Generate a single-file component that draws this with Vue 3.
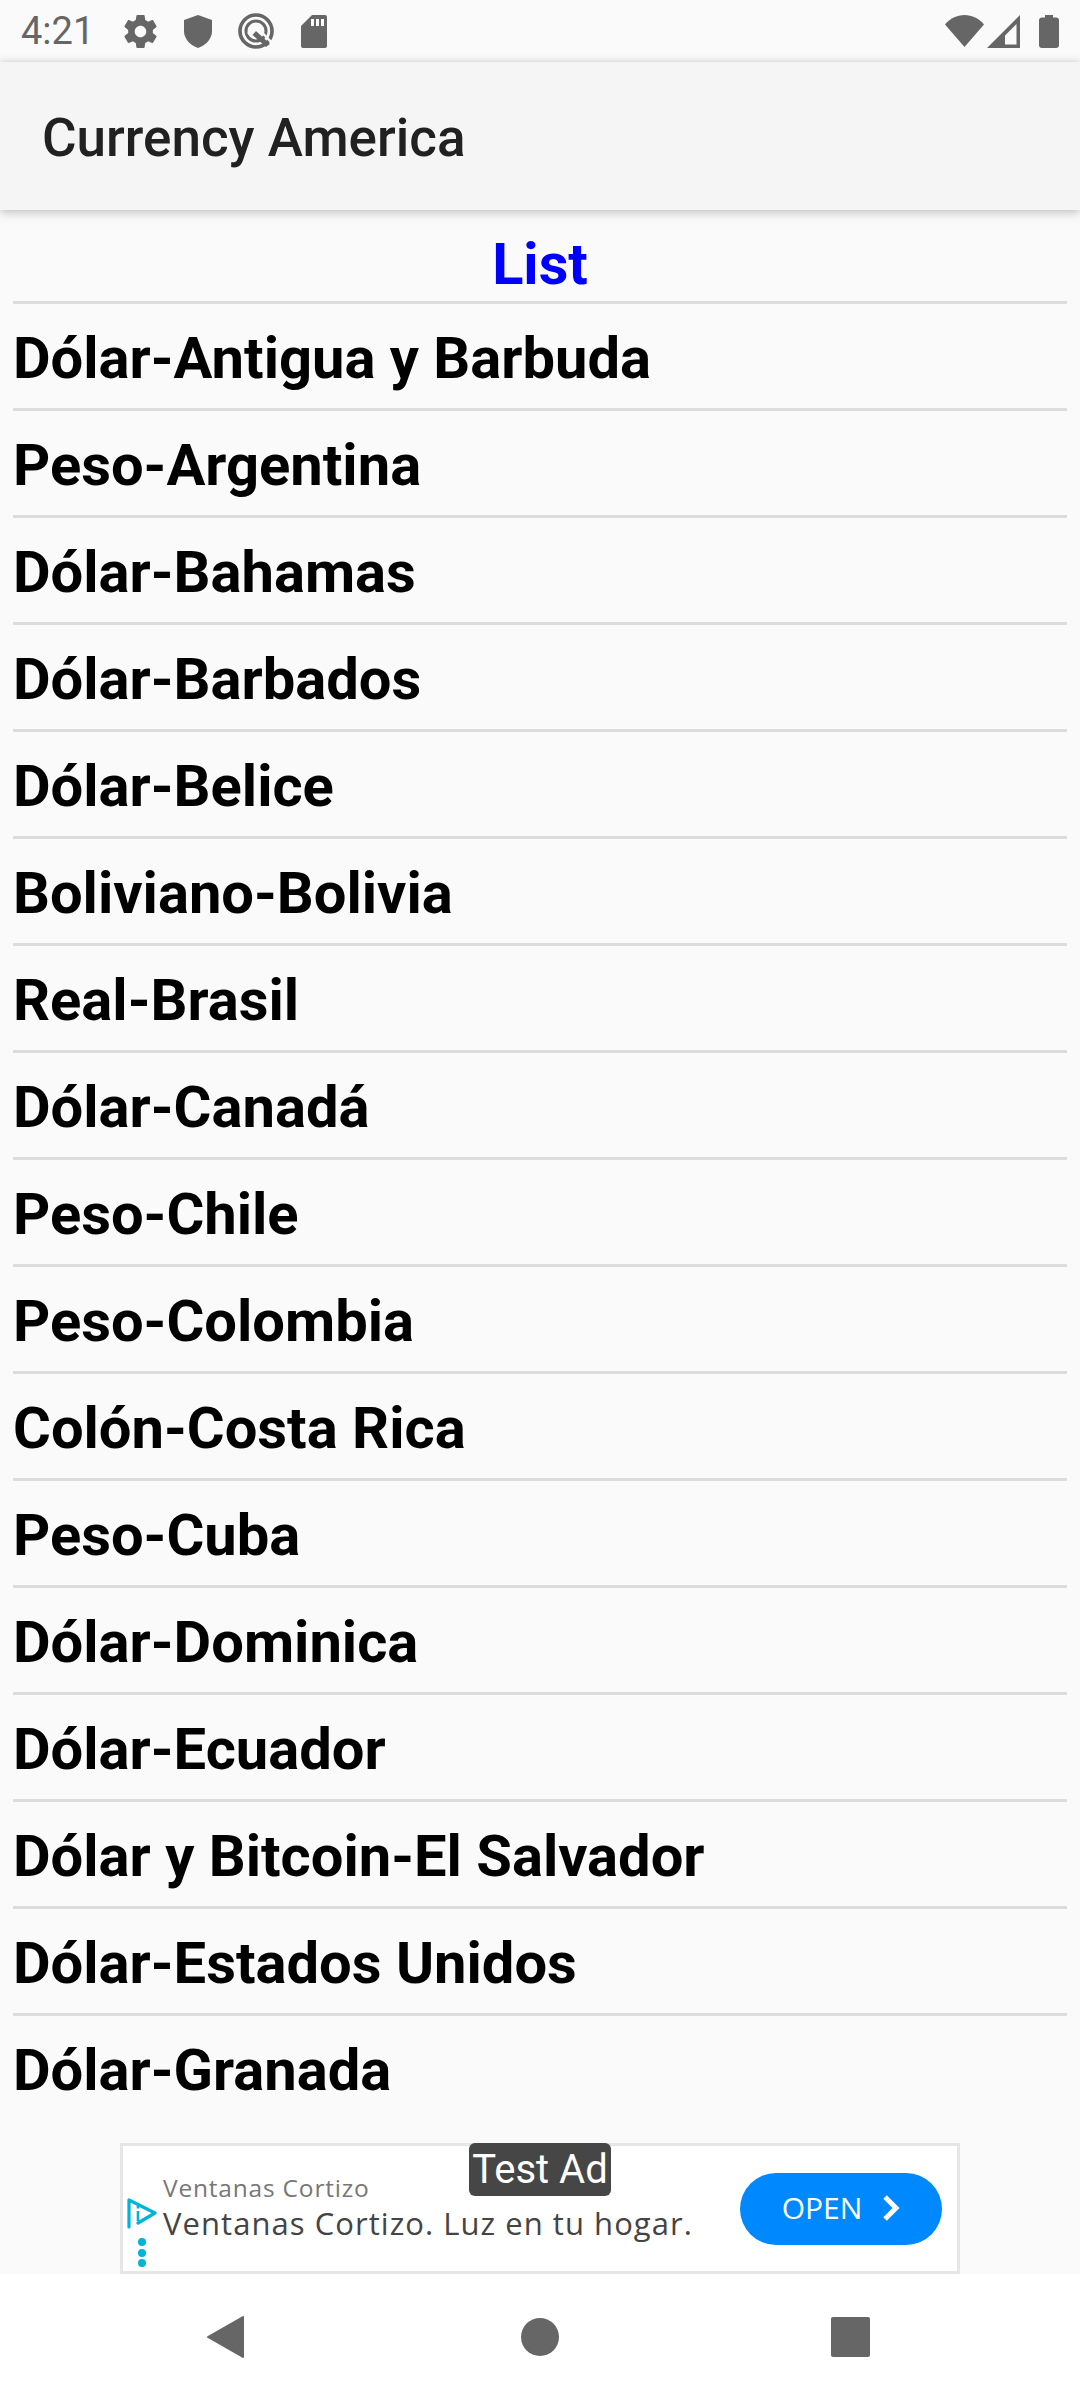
<script setup>
const rows = [
  'Dólar-Antigua y Barbuda','Peso-Argentina','Dólar-Bahamas','Dólar-Barbados','Dólar-Belice',
  'Boliviano-Bolivia','Real-Brasil','Dólar-Canadá','Peso-Chile','Peso-Colombia','Colón-Costa Rica',
  'Peso-Cuba','Dólar-Dominica','Dólar-Ecuador','Dólar y Bitcoin-El Salvador','Dólar-Estados Unidos','Dólar-Granada'
]
</script>

<template>
  <div class="page">
    <div class="status">
      <span class="time">4:21</span>
      <div class="left-icons">
        <svg width="33" height="33" viewBox="2 2 20 20"><path fill="#666" d="M19.43 12.98c.04-.32.07-.64.07-.98s-.03-.66-.07-.98l2.11-1.65c.19-.15.24-.42.12-.64l-2-3.46c-.12-.22-.39-.3-.61-.22l-2.49 1c-.52-.4-1.08-.73-1.69-.98l-.38-2.65C14.46 2.18 14.25 2 14 2h-4c-.25 0-.46.18-.49.42l-.38 2.65c-.61.25-1.17.59-1.69.98l-2.49-1c-.23-.09-.49 0-.61.22l-2 3.46c-.13.22-.07.49.12.64l2.11 1.65c-.04.32-.07.65-.07.98s.03.66.07.98l-2.11 1.65c-.19.15-.24.42-.12.64l2 3.46c.12.22.39.3.61.22l2.49-1c.52.4 1.08.73 1.69.98l.38 2.65c.03.24.24.42.49.42h4c.25 0 .46-.18.49-.42l.38-2.65c.61-.25 1.17-.59 1.69-.98l2.49 1c.23.09.49 0 .61-.22l2-3.46c.12-.22.07-.49-.12-.64l-2.11-1.65zM12 15.5c-1.93 0-3.5-1.57-3.5-3.5s1.57-3.5 3.5-3.5 3.5 1.57 3.5 3.5-1.57 3.5-3.5 3.5z"/></svg>
        <svg width="28" height="33" viewBox="0 0 28 33"><path fill="#666" d="M14 0 L28 5 V16 C28 24 22 30 14 33 C6 30 0 24 0 16 V5 Z"/></svg>
        <svg width="36" height="36" viewBox="0 0 36 36"><circle cx="18" cy="18" r="16" fill="none" stroke="#666" stroke-width="3.600"/><circle cx="18" cy="18" r="10" fill="none" stroke="#666" stroke-width="3"/><path d="M10 21 L18 13 L34 30" fill="none" stroke="#fafafa" stroke-width="2.500"/><path d="M14.500 22 L18 18 L32 31 L28 34 Z" fill="#666"/></svg>
        <svg width="26" height="33" viewBox="0 0 26 33"><path fill="#666" d="M11 0 H24 a2 2 0 0 1 2 2 V31 a2 2 0 0 1 -2 2 H2 a2 2 0 0 1 -2 -2 V11 Z"/><path fill="#fafafa" d="M10 4h3v7h-3zM15 4h3v7h-3zM20 4h3v7h-3z"/></svg>
      </div>
      <div class="right-icons">
        <svg width="39" height="32" viewBox="0 0 39 32"><path fill="#666" d="M19.500 32 L0 9.500 C5 3.500 12 0 19.500 0 C27 0 34 3.500 39 9.500 Z"/></svg>
        <svg class="sig" width="33" height="33" viewBox="0 0 33 33"><path fill="#666" fill-rule="evenodd" d="M0 33 L33 0 V33 Z M18 29.500 H29.500 V9 L18 20.500 Z"/></svg>
        <svg class="bat" width="20" height="33" viewBox="0 0 20 33"><path fill="#666" d="M6 0 H14 V2.500 H17 a3 3 0 0 1 3 3 V30 a3 3 0 0 1 -3 3 H3 a3 3 0 0 1 -3 -3 V5.500 a3 3 0 0 1 3 -3 H6 Z"/></svg>
      </div>
    </div>
    <header class="bar">Currency America</header>
    <main class="list">
      <div class="row head">List</div>
      <div v-for="r in rows" :key="r" class="row item">{{ r }}</div>
    </main>
    <div class="ad-wrap">
      <div class="ad">
        <div class="badge">Test Ad</div>
        <div class="adchoice">
          <svg width="30" height="31" viewBox="0 0 30 31"><path d="M2 2 L28 15 L11 25 M2 2 V29" fill="none" stroke="#00b4d8" stroke-width="3.200" stroke-linejoin="round" stroke-linecap="round"/><path d="M11 13 V23 M11 8 V10.500" fill="none" stroke="#00b4d8" stroke-width="2.600"/></svg>
          <div class="dots"><i></i><i></i><i></i></div>
        </div>
        <div class="adtext">
          <div class="a1">Ventanas Cortizo</div>
          <div class="a2">Ventanas Cortizo. Luz en tu hogar.</div>
        </div>
        <div class="open">
          <span>OPEN</span>
          <svg width="18" height="26" viewBox="0 0 18 26"><path d="M3 2 L14 13 L3 24" fill="none" stroke="#fff" stroke-width="5"/></svg>
        </div>
      </div>
    </div>
    <nav class="nav">
      <svg width="37" height="42" viewBox="0 0 37 42"><path fill="#666" stroke="#666" stroke-width="2" stroke-linejoin="round" d="M36 1 V41 L1 21 Z"/></svg>
      <svg class="home" width="38" height="38" viewBox="0 0 38 38"><circle cx="19" cy="19" r="19" fill="#666"/></svg>
      <svg class="recent" width="39" height="40" viewBox="0 0 39 40"><rect width="39" height="40" rx="2" fill="#666"/></svg>
    </nav>
  </div>
</template>

<style scoped>
.page { width: 1080px; height: 2400px; display: flex; flex-direction: column; background: #fafafa; font-family: Roboto, sans-serif; overflow: hidden; }
.status { height: 62px; flex: none; display: flex; align-items: center; padding: 0 21px; box-sizing: border-box; color: #666; background: #fafafa; }
.time { font-size: 38px; width: 103px; }
.left-icons { display: flex; align-items: center; gap: 26.5px; }
.right-icons { margin-left: auto; display: flex; align-items: center; }
.sig { margin-left: 3px; }
.bat { margin-left: 19px; }
.bar { height: 148px; flex: none; display: flex; align-items: center; padding-left: 42px; padding-top: 3px; box-sizing: border-box; font-size: 53px; font-weight: 500; color: #212121; background: #f5f5f5; box-shadow: 0 0 8px rgba(0,0,0,.18), 0 5px 10px rgba(0,0,0,.1); position: relative; }
.list { flex: 1; padding: 0 13px; min-height: 0; }
.row { box-sizing: border-box; border-bottom: 3px solid #dcdcdc; }
.head { height: 94px; font-size: 57.75px; font-weight: 700; color: #0000ff; text-align: center; line-height: 109px; }
.item { height: 107px; font-size: 57.9px; font-weight: 700; color: #000; display: flex; align-items: center; padding-top: 3px; }
.item:last-child { border-bottom: 0; padding-top: 0; }
.ad-wrap { flex: none; height: 131px; display: flex; justify-content: center; }
.ad { width: 840px; height: 131px; box-sizing: border-box; border: 3px solid #e6e6e6; background: #fff; position: relative; display: flex; font-family: "Open Sans", sans-serif; }
.badge { position: absolute; left: 346px; top: -3px; width: 142px; height: 53px; background: #464646; border-radius: 6px; color: #fff; font-family: Roboto, sans-serif; font-size: 40px; display: flex; align-items: center; justify-content: center; white-space: nowrap; }
.adchoice { width: 40px; flex: none; padding-left: 4px; padding-top: 52px; box-sizing: border-box; display: flex; flex-direction: column; }
.dots { display: flex; flex-direction: column; gap: 2.5px; margin: 9px 0 0 11px; }
.dots i { width: 8px; height: 8px; border-radius: 50%; background: #00b4d8; }
.adtext { padding-top: 25px; white-space: nowrap; }
.a1 { font-size: 24.5px; line-height: 33px; color: #777; letter-spacing: .8px; }
.a2 { font-size: 31px; line-height: 39px; color: #444; letter-spacing: 1.05px; }
.open { position: absolute; left: 617px; top: 27px; width: 202px; height: 72px; border-radius: 36px; background: #0088ff; color: #fff; display: flex; align-items: center; justify-content: center; gap: 20px; font-size: 30px; padding-bottom: 3px; box-sizing: border-box; }
.nav { flex: none; height: 126px; background: #fff; display: flex; align-items: center; padding-left: 207px; }
.home { margin-left: 277px; }
.recent { margin-left: 272px; }
</style>
